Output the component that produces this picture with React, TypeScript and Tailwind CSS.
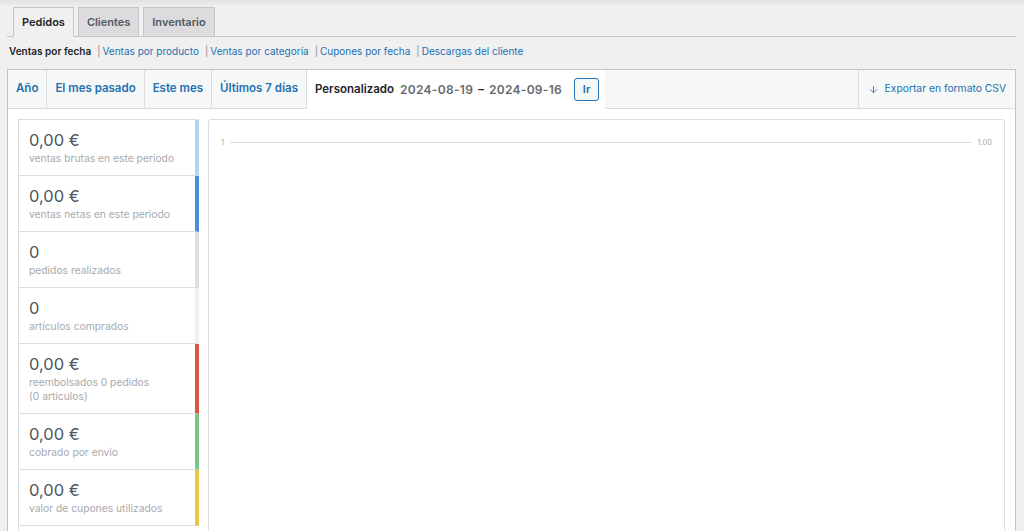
import { ArrowDown } from "lucide-react"

const legend = [
  { value: "0,00 €", label: ["ventas brutas en este periodo"], bar: "border-r-[#b6d3ee]" },
  { value: "0,00 €", label: ["ventas netas en este periodo"], bar: "border-r-[#4a8fd8]" },
  { value: "0", label: ["pedidos realizados"], bar: "border-r-[#dde1e6]" },
  { value: "0", label: ["artículos comprados"], bar: "border-r-[#eef1f3]" },
  { value: "0,00 €", label: ["reembolsados 0 pedidos", "(0 artículos)"], bar: "border-r-[#dc5743]" },
  { value: "0,00 €", label: ["cobrado por envío"], bar: "border-r-[#78c68e]" },
  { value: "0,00 €", label: ["valor de cupones utilizados"], bar: "border-r-[#ebc646]" },
]

const ranges = ["Año", "El mes pasado", "Este mes", "Últimos 7 días"]

const reports = ["Ventas por producto", "Ventas por categoría", "Cupones por fecha", "Descargas del cliente"]

export default function App() {
  return (
    <div className="min-h-screen bg-[#f0f0f1] font-['Inter',sans-serif] text-[#3c434a]">
      <div className="h-[7px] bg-gradient-to-b from-[#e2e2e3] to-[#f0f0f1]" />

      {/* main tabs */}
      <div className="mx-[7px] mr-2 flex gap-[4px] border-b border-[#c3c4c7] pl-[6px] text-[11px] leading-[14px]">
        <div className="-mb-px border border-b-[#f0f0f1] border-[#c3c4c7] bg-[#f0f0f1] px-[8px] pb-[7px] pt-[7px] font-semibold text-[#1d2327]">
          Pedidos
        </div>
        <div className="border border-b-0 border-[#c3c4c7] bg-[#dcdcde] px-[8px] pb-[7px] pt-[7px] font-semibold text-[#50575e]">
          Clientes
        </div>
        <div className="border border-b-0 border-[#c3c4c7] bg-[#dcdcde] px-[8px] pb-[7px] pt-[7px] font-semibold text-[#50575e]">
          Inventario
        </div>
      </div>

      {/* sub links */}
      <div className="flex items-center px-[9px] pt-[7px] text-[10px] leading-[14px]">
        <span className="font-semibold text-[#1d2327]">Ventas por fecha</span>
        {reports.map((r) => (
          <span key={r} className="text-[#2271b1]">
            <span className="ml-[6px] mr-[2px] text-[#8c8f94]">|</span>
            {r}
          </span>
        ))}
      </div>

      {/* postbox */}
      <div className="mx-[7px] mr-2 mt-[11px] border border-[#c3c4c7] bg-white">
        <div className="flex h-[39px] border-b border-[#dcdcde] bg-[#f6f7f7] text-[11.5px]">
          {ranges.map((r) => (
            <div
              key={r}
              className="flex items-center border-r border-[#dcdcde] px-[8px] font-semibold text-[#2271b1]"
            >
              {r}
            </div>
          ))}
          <div className="-mb-px flex w-[298px] items-center whitespace-nowrap bg-white pl-[8px]">
            <span className="font-semibold text-[#1d2327]">Personalizado</span>
            <span className="ml-[6px] text-[12px] font-semibold tracking-[0.3px] text-[#646970]">2024-08-19</span>
            <span className="mx-[5px] font-semibold text-[#1d2327]">–</span>
            <span className="text-[12px] font-semibold tracking-[0.3px] text-[#646970]">2024-09-16</span>
            <span className="ml-[12px] flex h-[23px] w-[25px] items-center justify-center rounded-[3px] border border-[#2271b1] bg-[#f6f7f7] text-[11px] font-semibold text-[#2271b1]">
              Ir
            </span>
          </div>
          <div className="flex-1" />
          <div className="flex items-center gap-[6px] border-l border-[#dcdcde] pl-[9px] pr-[9px] text-[10.3px] text-[#2271b1]">
            <ArrowDown className="h-[11px] w-[11px]" strokeWidth={1.8} />
            Exportar en formato CSV
          </div>
        </div>

        <div className="flex gap-[9px] px-[10px] pt-[10px]">
          <ul className="w-[181px] shrink-0 border-l border-t border-[#dcdcde]">
            {legend.map((item, i) => (
              <li
                key={i}
                className={`border-b border-r-4 border-b-[#dcdcde] ${item.bar} px-[10px] pb-[10px] pt-[9px]`}
              >
                <div className="text-[16.5px] leading-[22px] text-[#50575e]">{item.value}</div>
                {item.label.map((l) => (
                  <div key={l} className="text-[10.3px] leading-[14px] text-[#a7aaad]">
                    {l}
                  </div>
                ))}
              </li>
            ))}
          </ul>

          <div className="h-[420px] flex-1 rounded-t-[3px] border border-[#dcdcde] px-[12px] pt-[17px]">
            <div className="flex items-center gap-[6px] text-[7.5px] text-[#a7aaad]">
              <span>1</span>
              <div className="h-px flex-1 bg-[#dcdcde]" />
              <span>1.00</span>
            </div>
          </div>
        </div>
      </div>
    </div>
  )
}
